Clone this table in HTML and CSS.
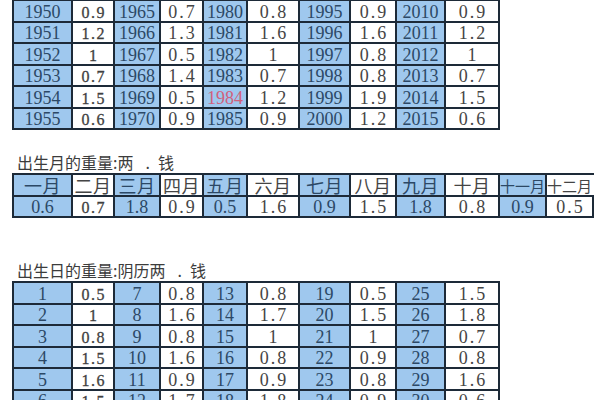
FILE: index.html
```html
<!DOCTYPE html>
<html lang="zh">
<head>
<meta charset="utf-8">
<link rel="stylesheet" href="styles.css">
</head>
<body>
<div class="page">
  <table class="grid years">
    <colgroup>
      <col class="c1"><col class="c2"><col class="c3"><col class="c4"><col class="c5">
      <col class="c6"><col class="c7"><col class="c8"><col class="c9"><col class="c10">
    </colgroup>
    <tbody>
      <tr><td class="k">1950</td><td class="s">0.9</td><td class="k">1965</td><td class="v">0.7</td><td class="k">1980</td><td class="v">0.8</td><td class="k">1995</td><td class="v">0.9</td><td class="k">2010</td><td class="v">0.9</td></tr>
      <tr><td class="k">1951</td><td class="s">1.2</td><td class="k">1966</td><td class="v">1.3</td><td class="k">1981</td><td class="v">1.6</td><td class="k">1996</td><td class="v">1.6</td><td class="k">2011</td><td class="v">1.2</td></tr>
      <tr><td class="k">1952</td><td class="s">1</td><td class="k">1967</td><td class="v">0.5</td><td class="k">1982</td><td class="v">1</td><td class="k">1997</td><td class="v">0.8</td><td class="k">2012</td><td class="v">1</td></tr>
      <tr><td class="k">1953</td><td class="s">0.7</td><td class="k">1968</td><td class="v">1.4</td><td class="k">1983</td><td class="v">0.7</td><td class="k">1998</td><td class="v">0.8</td><td class="k">2013</td><td class="v">0.7</td></tr>
      <tr><td class="k">1954</td><td class="s">1.5</td><td class="k">1969</td><td class="v">0.5</td><td class="k red">1984</td><td class="v">1.2</td><td class="k">1999</td><td class="v">1.9</td><td class="k">2014</td><td class="v">1.5</td></tr>
      <tr><td class="k">1955</td><td class="s">0.6</td><td class="k">1970</td><td class="v">0.9</td><td class="k">1985</td><td class="v">0.9</td><td class="k">2000</td><td class="v">1.2</td><td class="k">2015</td><td class="v">0.6</td></tr>
    </tbody>
  </table>

  <p class="title t-month">出生月的重量:两<span class="gap">.</span>钱</p>
  <table class="grid months">
    <colgroup>
      <col class="c1"><col class="c2"><col class="c3"><col class="c4"><col class="c5">
      <col class="c6"><col class="c7"><col class="c8"><col class="c9"><col class="c10">
      <col class="c11"><col class="c12">
    </colgroup>
    <tbody>
      <tr class="head">
        <td class="b">一月</td><td>二月</td><td class="b">三月</td><td>四月</td><td class="b">五月</td><td>六月</td>
        <td class="b">七月</td><td>八月</td><td class="b">九月</td><td>十月</td><td class="b narrow">十一月</td><td class="narrow open">十二月</td>
      </tr>
      <tr>
        <td class="k">0.6</td><td class="s">0.7</td><td class="k">1.8</td><td class="v">0.9</td><td class="k">0.5</td><td class="v">1.6</td>
        <td class="k">0.9</td><td class="v">1.5</td><td class="k">1.8</td><td class="v">0.8</td><td class="k">0.9</td><td class="v">0.5</td>
      </tr>
    </tbody>
  </table>

  <p class="title t-day">出生日的重量:阴历两<span class="gap">.</span>钱</p>
  <table class="grid days">
    <colgroup>
      <col class="c1"><col class="c2"><col class="c3"><col class="c4"><col class="c5">
      <col class="c6"><col class="c7"><col class="c8"><col class="c9"><col class="c10">
    </colgroup>
    <tbody>
      <tr><td class="k">1</td><td class="s">0.5</td><td class="k">7</td><td class="v">0.8</td><td class="k">13</td><td class="v">0.8</td><td class="k">19</td><td class="v">0.5</td><td class="k">25</td><td class="v">1.5</td></tr>
      <tr><td class="k">2</td><td class="s">1</td><td class="k">8</td><td class="v">1.6</td><td class="k">14</td><td class="v">1.7</td><td class="k">20</td><td class="v">1.5</td><td class="k">26</td><td class="v">1.8</td></tr>
      <tr><td class="k">3</td><td class="s">0.8</td><td class="k">9</td><td class="v">0.8</td><td class="k">15</td><td class="v">1</td><td class="k">21</td><td class="v">1</td><td class="k">27</td><td class="v">0.7</td></tr>
      <tr><td class="k">4</td><td class="s">1.5</td><td class="k">10</td><td class="v">1.6</td><td class="k">16</td><td class="v">0.8</td><td class="k">22</td><td class="v">0.9</td><td class="k">28</td><td class="v">0.8</td></tr>
      <tr><td class="k">5</td><td class="s">1.6</td><td class="k">11</td><td class="v">0.9</td><td class="k">17</td><td class="v">0.9</td><td class="k">23</td><td class="v">0.8</td><td class="k">29</td><td class="v">1.6</td></tr>
      <tr><td class="k">6</td><td class="s">1.5</td><td class="k">12</td><td class="v">1.7</td><td class="k">18</td><td class="v">1.8</td><td class="k">24</td><td class="v">0.9</td><td class="k">30</td><td class="v">0.6</td></tr>
    </tbody>
  </table>
</div>
</body>
</html>
```

FILE: styles.css
```css
html, body {
  margin: 0;
  padding: 0;
  background: #ffffff;
  overflow: hidden;
}

body {
  font-family: "Liberation Serif", "Noto Sans CJK SC", serif;
  color: #3a3a3a;
}

.page {
  padding-left: 12px;
}

.grid {
  border-collapse: collapse;
  table-layout: fixed;
}

.grid td {
  border: 2px solid #1d2a38;
  padding: 0;
  height: 19.5px;
  text-align: center;
  vertical-align: bottom;
  line-height: 17px;
  white-space: nowrap;
  font-size: 18px;
  color: #454545;
  background: #ffffff;
}

.grid .c1 { width: 59px; }
.grid .c2 { width: 42px; }
.grid .c3 { width: 46px; }
.grid .c4 { width: 43px; }
.grid .c5 { width: 44px; }
.grid .c6 { width: 52px; }
.grid .c7 { width: 51px; }
.grid .c8 { width: 46px; }
.grid .c9 { width: 49px; }
.grid .c10 { width: 54px; }
.grid .c11 { width: 45px; }
.grid .c12 { width: 44px; }

.grid td.k,
.grid td.b {
  background: #9fc8ee;
  color: #2c4866;
}

.grid td.v {
  letter-spacing: 2px;
  text-indent: 2px;
}

.grid td.s {
  font-size: 16px;
  letter-spacing: 1.5px;
  text-indent: 1.5px;
  color: #3f3f3f;
  -webkit-text-stroke: 0.3px #3f3f3f;
}

.grid td.red {
  color: #d2607c;
}

.years {
  margin-top: -1px;
}

.title {
  margin: 0;
  padding-left: 5px;
  font-family: "Noto Sans CJK SC", sans-serif;
  font-size: 16px;
  line-height: 16px;
  color: #3c3c3c;
}

.title .gap {
  margin: 0 8px 0 12px;
}

.t-month {
  margin-top: 24px;
  margin-bottom: 3px;
}

.t-day {
  margin-top: 44px;
  margin-bottom: 3px;
}

.months .head td {
  font-family: "Noto Sans CJK SC", sans-serif;
  font-size: 18px;
  line-height: 19px;
  letter-spacing: 0.5px;
}

.months .head td.narrow {
  font-size: 15px;
  letter-spacing: 0;
  overflow: visible;
}

.months .head td.open {
  border-right-color: transparent;
}
```
